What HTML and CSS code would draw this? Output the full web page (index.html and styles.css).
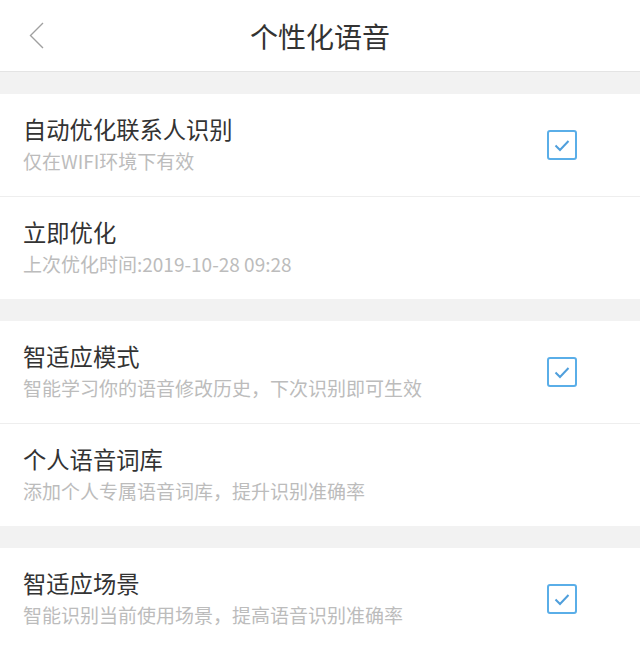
FILE: index.html
```html
<!DOCTYPE html>
<html lang="zh-CN">
<head>
<meta charset="utf-8">
<link rel="stylesheet" href="styles.css">
</head>
<body>
<div class="page">
  <header class="topbar">
    <svg class="back" width="16" height="30" viewBox="0 0 16 30"><path d="M14 2 L1.5 14.5 L14 27" fill="none" stroke="#a0a0a0" stroke-width="1.4"/></svg>
    <h1 class="title">个性化语音</h1>
  </header>
  <div class="band"></div>
  <section class="group">
    <div class="row">
      <div class="text">
        <div class="name">自动优化联系人识别</div>
        <div class="desc">仅在WIFI环境下有效</div>
      </div>
      <svg class="check" width="30" height="30" viewBox="0 0 30 30"><rect x="1" y="1" width="28" height="28" rx="2" fill="#fff" stroke="#5aaee8" stroke-width="2"/><path d="M8.5 15.5 L13 20 L21.5 11" fill="none" stroke="#4f9fdc" stroke-width="2"/></svg>
    </div>
    <div class="row">
      <div class="text">
        <div class="name">立即优化</div>
        <div class="desc">上次优化时间:2019-10-28 09:28</div>
      </div>
    </div>
  </section>
  <div class="band"></div>
  <section class="group">
    <div class="row">
      <div class="text">
        <div class="name">智适应模式</div>
        <div class="desc">智能学习你的语音修改历史，下次识别即可生效</div>
      </div>
      <svg class="check" width="30" height="30" viewBox="0 0 30 30"><rect x="1" y="1" width="28" height="28" rx="2" fill="#fff" stroke="#5aaee8" stroke-width="2"/><path d="M8.5 15.5 L13 20 L21.5 11" fill="none" stroke="#4f9fdc" stroke-width="2"/></svg>
    </div>
    <div class="row">
      <div class="text">
        <div class="name">个人语音词库</div>
        <div class="desc">添加个人专属语音词库，提升识别准确率</div>
      </div>
    </div>
  </section>
  <div class="band"></div>
  <section class="group">
    <div class="row">
      <div class="text">
        <div class="name">智适应场景</div>
        <div class="desc">智能识别当前使用场景，提高语音识别准确率</div>
      </div>
      <svg class="check" width="30" height="30" viewBox="0 0 30 30"><rect x="1" y="1" width="28" height="28" rx="2" fill="#fff" stroke="#5aaee8" stroke-width="2"/><path d="M8.5 15.5 L13 20 L21.5 11" fill="none" stroke="#4f9fdc" stroke-width="2"/></svg>
    </div>
  </section>
</div>
</body>
</html>
```
FILE: styles.css
```css
html, body {
  margin: 0;
  padding: 0;
  background: #fff;
}
body {
  font-family: "Noto Sans CJK SC", "Noto Sans", sans-serif;
  width: 640px;
  height: 645px;
  overflow: hidden;
}
.page {
  width: 640px;
}
.topbar {
  position: relative;
  height: 71px;
  border-bottom: 1px solid #e4e4e4;
  display: flex;
  align-items: center;
  justify-content: center;
}
.back {
  position: absolute;
  left: 29px;
  top: 21px;
}
.title {
  margin: 0;
  font-size: 28px;
  font-weight: 400;
  color: #333;
  line-height: 1;
}
.band {
  height: 22px;
  background: #f2f2f2;
}
.group {
  display: flex;
  flex-direction: column;
}
.row {
  height: 102px;
  display: flex;
  align-items: center;
  justify-content: space-between;
  padding: 0 63px 0 23px;
}
.row + .row {
  border-top: 1px solid #eeeeee;
}
.text {
  display: flex;
  flex-direction: column;
  gap: 4px;
  margin-top: -2px;
}
.name {
  font-size: 23.3px;
  line-height: 30px;
  color: #333;
}
.desc {
  font-size: 19px;
  line-height: 26px;
  color: #bcbcbc;
}
.check {
  display: block;
}
```
